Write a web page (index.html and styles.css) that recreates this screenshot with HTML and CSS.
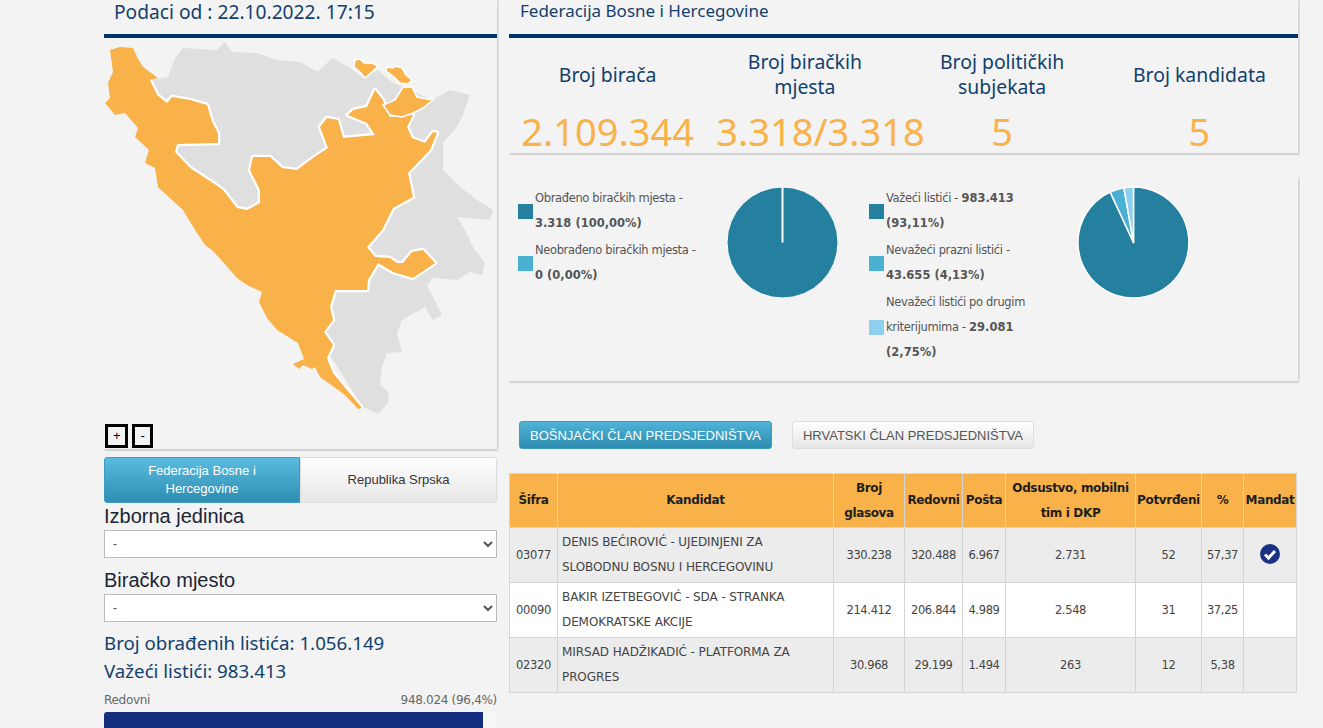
FILE: index.html
```html
<!DOCTYPE html>
<html lang="en">
<head>
  <meta charset="UTF-8" />
  <title>Rezultati izbora</title>
  <link rel="stylesheet" href="styles.css">
</head>
<body>
  <div class="page">
    <div class="left-col">
      <div class="panel map-panel">
        <div class="panel-head big">Podaci od : 22.10.2022. 17:15</div>
        <svg class="map" viewBox="104 38 393 411">
          <polygon class="map-gray" points="150,80 168,77 175,58 183,48 217,50 225,42 232,52 257,53 277,60 300,62 318,72 332,58 340,62 353,70 363,78 378,70 393,83 410,90 433,100 450,90 470,95 462,117 457,127 443,143 443,170 460,187 477,200 493,210 490,220 457,217 465,230 473,247 485,263 482,275 470,272 457,280 433,278 427,285 433,297 442,315 433,320 425,307 402,320 397,333 402,352 387,353 382,367 380,385 389,393 388,403 378,414 363,407 320,340 200,200 140,110"/>
          <polyline class="map-line" points="150,80 157,95 167,103 172,97 190,100 207,105 212,122 218,133 218,143 177,144 175,152 190,168 213,183 223,190 237,208 247,210 260,203 260,190 250,170 253,157 270,157 282,168 297,170 313,158 328,148 320,127 327,118 338,120 343,138 375,135 367,123 348,115 353,110 367,107 375,90 383,100 385,108 390,117 413,115 407,127 412,138 425,143 433,132 437,133 430,150 408,173 413,197 393,208 382,230 367,247 375,257 390,258 397,263 403,263 412,252 423,250 435,263 413,278 393,272 378,263 368,280 367,290 335,290 330,307 333,320 324,332 333,345 327,358 333,373 362,408"/>
          <polygon class="map-orange" points="110,50 120,47 133,48 137,57 143,67 158,78 150,80 157,95 167,103 172,97 190,100 207,105 212,122 218,133 218,143 177,144 175,152 190,168 213,183 223,190 237,208 247,210 260,203 260,190 250,170 253,157 270,157 282,168 297,170 313,158 328,148 320,127 327,118 338,120 343,138 375,135 367,123 348,115 353,110 367,107 375,90 383,100 385,108 390,117 413,115 407,127 412,138 425,143 433,132 437,133 430,150 408,173 413,197 393,208 382,230 367,247 375,257 390,258 397,263 403,263 412,252 423,250 435,263 413,278 393,272 378,263 368,280 367,290 335,290 330,307 333,320 324,332 333,345 327,358 333,373 362,408 358,409 345,395 320,377 315,367 312,369 303,365 299,369 293,364 304,359 298,343 277,330 267,318 259,302 262,292 247,285 237,278 223,262 212,250 205,245 195,230 183,210 172,200 158,187 155,168 145,163 149,150 135,137 138,128 125,113 115,115 105,103 110,98 108,83 113,72"/>
          <polygon class="map-orange map-piece" points="355,60 360,59 364,63 372,63 378,66 372,72 365,78 360,72 354,67"/>
          <polygon class="map-orange map-piece" points="387,67 393,68 396,66 402,68 406,75 412,80 408,84 400,83 394,77 386,71"/>
          <polygon class="map-orange map-piece" points="403,87 412,87 417,97 433,100 423,108 413,113 402,117 390,115 383,105 395,100"/>
        </svg>
        <div class="zoom-btns">
          <span class="zoom-btn">+</span>
          <span class="zoom-btn minus">-</span>
        </div>
      </div>

      <div class="tabs">
        <div class="tab active">Federacija Bosne i Hercegovine</div>
        <div class="tab">Republika Srpska</div>
      </div>

      <label class="field-label">Izborna jedinica</label>
      <select class="field"><option>-</option></select>
      <label class="field-label second">Biračko mjesto</label>
      <select class="field"><option>-</option></select>

      <div class="count first">Broj obrađenih listića: 1.056.149</div>
      <div class="count">Važeći listići: 983.413</div>

      <div class="bar-head"><span>Redovni</span><span>948.024 (96,4%)</span></div>
      <div class="bar"><div class="bar-fill" style="width: 96.4%"></div></div>
    </div>

    <div class="right-col">
      <div class="panel">
        <div class="panel-head sub">Federacija Bosne i Hercegovine</div>
        <div class="stats">
          <div class="stat"><div class="stat-label">Broj birača</div><div class="stat-value">2.109.344</div></div>
          <div class="stat"><div class="stat-label">Broj biračkih mjesta</div><div class="stat-value">3.318/3.318</div></div>
          <div class="stat"><div class="stat-label">Broj političkih subjekata</div><div class="stat-value">5</div></div>
          <div class="stat"><div class="stat-label">Broj kandidata</div><div class="stat-value">5</div></div>
        </div>
      </div>

      <div class="panel charts">
        <div class="chart">
          <div class="legend">
            <div class="legend-item"><i class="swatch c1"></i><span>Obrađeno biračkih mjesta -<br><b>3.318 (100,00%)</b></span></div>
            <div class="legend-item"><i class="swatch c2"></i><span>Neobrađeno biračkih mjesta -<br><b>0 (0,00%)</b></span></div>
          </div>
          <svg class="pie" viewBox="-56.5 -56.5 113 113">
            <circle r="55.5" fill="#24809e" stroke="#fff" stroke-width="1"/>
            <line x1="0" y1="0" x2="0" y2="-56" stroke="#fff" stroke-width="2"/>
          </svg>
        </div>
        <div class="chart">
          <div class="legend">
            <div class="legend-item"><i class="swatch c1"></i><span>Važeći listići - <b>983.413</b><br><b>(93,11%)</b></span></div>
            <div class="legend-item"><i class="swatch c2"></i><span>Nevažeći prazni listići -<br><b>43.655 (4,13%)</b></span></div>
            <div class="legend-item"><i class="swatch c3"></i><span>Nevažeći listići po drugim<br>kriterijumima - <b>29.081</b><br><b>(2,75%)</b></span></div>
          </div>
          <svg class="pie" viewBox="-56.5 -56.5 113 113">
            <g stroke="#fff" stroke-width="1.5" stroke-linejoin="round">
              <path d="M0 0 L0 -55.5 A55.5 55.5 0 1 1 -23.3 -50.4 Z" fill="#24809e"/>
              <path d="M0 0 L-23.3 -50.4 A55.5 55.5 0 0 1 -9.6 -54.7 Z" fill="#4bb1d3"/>
              <path d="M0 0 L-9.6 -54.7 A55.5 55.5 0 0 1 0 -55.5 Z" fill="#8fcfee"/>
            </g>
          </svg>
        </div>
      </div>

      <div class="race-btns">
        <button class="btn active">BOŠNJAČKI ČLAN PREDSJEDNIŠTVA</button>
        <button class="btn">HRVATSKI ČLAN PREDSJEDNIŠTVA</button>
      </div>

      <table class="results">
        <colgroup>
          <col class="w-sifra"><col class="w-kandidat"><col class="w-broj"><col class="w-redovni"><col class="w-posta"><col class="w-odsustvo"><col class="w-potvrdeni"><col class="w-pct"><col class="w-mandat">
        </colgroup>
        <thead>
          <tr>
            <th>Šifra</th><th>Kandidat</th><th>Broj glasova</th><th>Redovni</th><th>Pošta</th><th>Odsustvo, mobilni tim i DKP</th><th>Potvrđeni</th><th>%</th><th>Mandat</th>
          </tr>
        </thead>
        <tbody>
          <tr>
            <td>03077</td><td class="name">DENIS BEĆIROVIĆ - UJEDINJENI ZA SLOBODNU BOSNU I HERCEGOVINU</td><td>330.238</td><td>320.488</td><td>6.967</td><td>2.731</td><td>52</td><td>57,37</td>
            <td>
              <svg class="check" viewBox="0 0 20 20">
                <circle cx="10" cy="10" r="10" fill="#1b3184"/>
                <polyline points="5,10.5 8.5,14 15,7" fill="none" stroke="#fff" stroke-width="3"/>
              </svg>
            </td>
          </tr>
          <tr>
            <td>00090</td><td class="name">BAKIR IZETBEGOVIĆ - SDA - STRANKA DEMOKRATSKE AKCIJE</td><td>214.412</td><td>206.844</td><td>4.989</td><td>2.548</td><td>31</td><td>37,25</td><td></td>
          </tr>
          <tr>
            <td>02320</td><td class="name">MIRSAD HADŽIKADIĆ - PLATFORMA ZA PROGRES</td><td>30.968</td><td>29.199</td><td>1.494</td><td>263</td><td>12</td><td>5,38</td><td></td>
          </tr>
        </tbody>
      </table>
    </div>
  </div>
</body>
</html>
```

FILE: styles.css
```css
* {
  box-sizing: border-box;
  margin: 0;
  padding: 0;
}

html, body {
  height: 728px;
  overflow: hidden;
}

body {
  background-color: #f3f3f3;
  font-family: "DejaVu Sans", sans-serif;
  font-size: 11.5px;
  letter-spacing: -0.35px;
  color: #555;
}

b {
  letter-spacing: 0;
}

.page {
  display: grid;
  grid-template-columns: 393px 789px;
  gap: 12px;
  margin-left: 104px;
}

.panel {
  box-shadow: 1px 2px 1px #d4d4d4, 2px 0 0 #e2e2e2;
}

.panel-head {
  height: 38px;
  border-bottom: 4px solid #003366;
  padding-left: 10px;
  font-family: "Noto Sans", sans-serif;
  letter-spacing: 0;
  color: #123f6d;
}

.panel-head.big {
  font-size: 19.2px;
  line-height: 24px;
}

.panel-head.sub {
  padding-left: 11px;
  font-size: 17px;
  line-height: 22px;
}

/* map */
.map-panel {
  position: relative;
}

.map {
  display: block;
  width: 393px;
  height: 411px;
}

.map-gray {
  fill: #dfdfdf;
}

.map-line {
  fill: none;
  stroke: #fff;
  stroke-width: 4.5;
  stroke-linejoin: round;
}

.map-orange {
  fill: #f9b24a;
}

.map-piece {
  stroke: #fff;
  stroke-width: 1.5;
}

.zoom-btns {
  position: absolute;
  left: 1px;
  bottom: 1px;
  display: flex;
  gap: 4px;
}

.zoom-btn {
  width: 23px;
  height: 24px;
  border: 3px solid #000;
  color: #000;
  font-family: "Liberation Sans", sans-serif;
  font-size: 13px;
  line-height: 18px;
  text-align: center;
}

.zoom-btn.minus {
  width: 21px;
}

/* tabs */
.tabs {
  display: flex;
  margin-top: 8px;
}

.tab {
  flex: none;
  width: 197px;
  height: 46px;
  display: flex;
  align-items: center;
  justify-content: center;
  padding: 0 30px;
  text-align: center;
  font-family: "Liberation Sans", sans-serif;
  font-size: 13px;
  letter-spacing: 0;
  line-height: 18px;
  color: #333;
  background: linear-gradient(#ffffff, #e6e6e6);
  border: 1px solid #ddd;
  border-radius: 0 3px 3px 0;
}

.tab.active {
  width: 196px;
  color: #fff;
  background: linear-gradient(#5abcdf, #2e8db0);
  border-color: #3b9cbd;
  border-radius: 3px 0 0 3px;
}

/* filters */
.field-label {
  display: block;
  height: 26px;
  font-family: "Liberation Sans", sans-serif;
  font-size: 20px;
  letter-spacing: 0;
  line-height: 26px;
  color: #1a2433;
}

.field-label.second {
  margin-top: 9px;
}

.field {
  display: block;
  width: 100%;
  height: 28px;
  margin-top: 1px;
  padding-left: 4px;
  background-color: #fff;
  border: 1px solid #bbb;
  color: #555;
  font-family: "Liberation Sans", sans-serif;
  font-size: 12px;
}

.count {
  font-family: "Noto Sans", sans-serif;
  font-size: 18.7px;
  letter-spacing: 0;
  line-height: 28px;
  color: #123f6d;
}

.count.first {
  margin-top: 7px;
}

.bar-head {
  display: flex;
  justify-content: space-between;
  margin-top: 7px;
  font-size: 12px;
  letter-spacing: -0.3px;
  line-height: 16px;
  color: #666;
}

.bar {
  height: 30px;
  margin-top: 4px;
  background-color: #f7f7f7;
  border-radius: 3px;
}

.bar-fill {
  height: 100%;
  background-color: #152f80;
  border-radius: 3px 0 0 3px;
}

/* stats */
.stats {
  display: grid;
  grid-template-columns: repeat(4, 1fr);
  height: 115px;
  padding-top: 11px;
}

.stat {
  min-width: 0;
  padding: 0 10px;
  text-align: center;
  font-family: "Noto Sans", sans-serif;
  letter-spacing: 0;
}

.stat-label {
  height: 50px;
  display: flex;
  align-items: center;
  justify-content: center;
  font-size: 19.4px;
  line-height: 25px;
  color: #123f6d;
}

.stat-value {
  margin-top: 10px;
  font-size: 38px;
  line-height: 44px;
  white-space: nowrap;
  color: #f9b24a;
}

/* charts */
.charts {
  display: flex;
  height: 204px;
  margin-top: 24px;
  padding: 9px 0 0 9px;
}

.chart {
  position: relative;
  width: 351px;
  display: flex;
}

.legend {
  width: 208px;
  line-height: 25px;
}

.legend-item {
  display: flex;
  align-items: center;
  gap: 2px;
  margin-bottom: 2px;
}

.swatch {
  flex: none;
  width: 15px;
  height: 15px;
}

.c1 { background-color: #24809e; }
.c2 { background-color: #4bb1d3; }
.c3 { background-color: #8fcfee; }

.pie {
  width: 113px;
  height: 113px;
}

/* buttons */
.race-btns {
  display: flex;
  gap: 20px;
  margin-top: 40px;
  padding-left: 10px;
}

.btn {
  height: 28px;
  padding: 0 10px;
  font-family: "Liberation Sans", sans-serif;
  font-size: 13px;
  letter-spacing: 0;
  color: #555;
  background: linear-gradient(#ffffff, #e6e6e6);
  border: 1px solid #ddd;
  border-radius: 3px;
}

.btn.active {
  color: #fff;
  background: linear-gradient(#4fb2d6, #2e8db0);
  border-color: #3b9cbd;
}

/* table */
.results {
  width: 787px;
  margin-top: 24px;
  table-layout: fixed;
  border-collapse: collapse;
}

.w-sifra { width: 48px; }
.w-kandidat { width: 276px; }
.w-broj { width: 71px; }
.w-redovni { width: 58px; }
.w-posta { width: 43px; }
.w-odsustvo { width: 130px; }
.w-potvrdeni { width: 66px; }
.w-pct { width: 42px; }
.w-mandat { width: 53px; }

.results th, .results td {
  border: 1px solid #d5d5d5;
  text-align: center;
  line-height: 25px;
  padding: 0 1px;
}

.results th {
  height: 54px;
  background-color: #f9b24a;
  color: #1e1e1e;
  font-size: 12px;
  font-weight: bold;
}

.results td {
  height: 55px;
  color: #444;
  background-color: #fff;
}

.results tbody tr:nth-child(odd) td {
  background-color: #ececec;
}

.results td.name {
  padding: 0 4px;
  font-size: 12px;
  letter-spacing: -0.1px;
  text-align: left;
}

.check {
  display: block;
  width: 20px;
  height: 20px;
  margin: 0 auto 2px;
}
```
